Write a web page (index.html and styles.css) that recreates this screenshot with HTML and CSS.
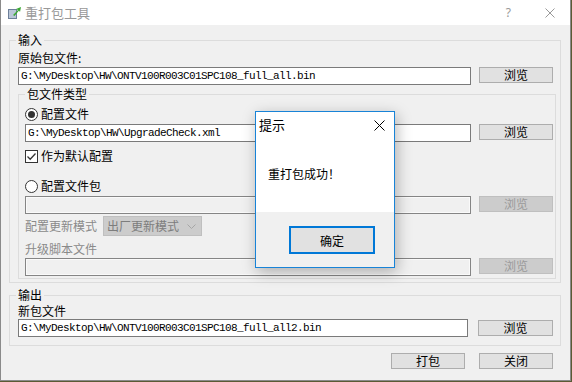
FILE: index.html
```html
<!DOCTYPE html>
<html lang="zh-CN">
<head>
  <meta charset="UTF-8">
  <title>重打包工具</title>
  <link rel="stylesheet" href="styles.css">
</head>
<body>

  <div class="window">
    <!-- title bar (inactive, the message box has focus) -->
    <div class="titlebar">
      <svg class="app-icon" width="16" height="16" viewBox="0 0 16 16">
        <rect x="1" y="4" width="9" height="10" fill="#6d7f99"/>
        <rect x="2" y="5" width="7" height="8" fill="#b9c6d8"/>
        <path d="M6 10 L11 5 L9 4 L14 2 L13 7 L12 5.5 L7.5 11 Z" fill="#3aa832"/>
      </svg>
      <span class="title">重打包工具</span>
      <span class="tb-help">?</span>
      <svg class="tb-close" width="10" height="10" viewBox="0 0 10 10">
        <path d="M0.5 0.5 L9.5 9.5 M9.5 0.5 L0.5 9.5" stroke="#999" stroke-width="1"/>
      </svg>
    </div>

    <div class="content">
      <fieldset class="group group-input">
        <legend>输入</legend>
        <div class="label">原始包文件:</div>
        <div class="file-row row-src">
          <div class="field">G:\MyDesktop\HW\ONTV100R003C01SPC108_full_all.bin</div>
          <button class="btn">浏览</button>
        </div>

        <fieldset class="group group-type">
          <legend>包文件类型</legend>
          <div class="option"><span class="radio checked"></span>配置文件</div>
          <div class="file-row row-cfg">
            <div class="field">G:\MyDesktop\HW\UpgradeCheck.xml</div>
            <button class="btn">浏览</button>
          </div>
          <div class="option row-default">
            <span class="checkbox">
              <svg width="11" height="11" viewBox="0 0 11 11">
                <path d="M1.5 5.5 L4.2 8.2 L9.5 2.5" fill="none" stroke="#333" stroke-width="1.3"/>
              </svg>
            </span>作为默认配置
          </div>
          <div class="option row-pack"><span class="radio"></span>配置文件包</div>
          <div class="file-row row-packfile">
            <div class="field disabled"></div>
            <button class="btn" disabled>浏览</button>
          </div>
          <div class="mode-row">
            <span class="label disabled-text">配置更新模式</span>
            <div class="select">
              <span>出厂更新模式</span>
              <svg width="9" height="5" viewBox="0 0 9 5">
                <path d="M0.5 0.5 L4.5 4.5 L8.5 0.5" fill="none" stroke="#a6a6a6" stroke-width="1"/>
              </svg>
            </div>
          </div>
          <div class="label disabled-text row-script">升级脚本文件</div>
          <div class="file-row row-scriptfile">
            <div class="field disabled"></div>
            <button class="btn" disabled>浏览</button>
          </div>
        </fieldset>
      </fieldset>

      <fieldset class="group group-output">
        <legend>输出</legend>
        <div class="label">新包文件</div>
        <div class="file-row row-out">
          <div class="field">G:\MyDesktop\HW\ONTV100R003C01SPC108_full_all2.bin</div>
          <button class="btn">浏览</button>
        </div>
      </fieldset>

      <div class="actions">
        <button class="btn">打包</button>
        <button class="btn">关闭</button>
      </div>
    </div>

    <!-- message box on top of the main window -->
    <div class="msgbox">
      <div class="msg-main">
        <div class="msg-title">
          <span>提示</span>
          <svg width="11" height="11" viewBox="0 0 11 11">
            <path d="M0.5 0.5 L10.5 10.5 M10.5 0.5 L0.5 10.5" stroke="#000" stroke-width="1"/>
          </svg>
        </div>
        <div class="msg-text">重打包成功！</div>
      </div>
      <div class="msg-footer">
        <button class="msg-ok">确定</button>
      </div>
    </div>
  </div>

</body>
</html>
```

FILE: styles.css
```css
* {
  margin: 0;
  padding: 0;
  box-sizing: border-box;
}

html, body {
  height: 100%;
  background: #5b5a34;
  font-family: "Noto Sans CJK SC", sans-serif;
  font-size: 12px;
  line-height: 14px;
  color: #000;
  overflow: hidden;
}

.window {
  position: relative;
  width: 571px;
  height: 381px;
  background: #f0f0f0;
  border: 1px solid #8a8a8a;
  border-top: none;
  display: flex;
  flex-direction: column;
}

/* title bar */
.titlebar {
  height: 25px;
  background: #fff;
  display: flex;
  align-items: center;
  padding: 0 15px 0 6px;
}

.app-icon {
  flex: none;
}

.title {
  margin-left: 2px;
  font-size: 13px;
  color: #999;
  flex: 1;
}

.tb-help {
  font-family: "Noto Sans", sans-serif;
  font-size: 12px;
  color: #999;
  margin-right: 34px;
}

/* content */
.content {
  display: flex;
  flex-direction: column;
  padding: 0 8px 0 8px;
}

.group {
  border: 1px solid #dcdcdc;
  min-width: 0;
}

.group legend {
  padding: 0 2px;
  margin-left: -2px;
  line-height: 14px;
}

.group-input {
  margin: 8px 1px 0 0;
  padding: 4px 7px 3px 8px;
}

.group-type {
  margin: 2px -3px 0 0;
  padding: 6px 2px 2px 6px;
}

.group-type legend {
  margin-left: 0;
}

.group-output {
  margin: 5px 1px 0 0;
  padding: 2px 7px 8px 8px;
}

.label {
  height: 14px;
  white-space: nowrap;
}

.disabled-text {
  color: #8a8a8a;
}

/* file path row: text box + browse button */
.file-row {
  display: flex;
  gap: 8px;
  align-items: flex-start;
}

.row-src { margin-top: 2px; }
.row-cfg { margin-top: 3px; }
.row-packfile { margin-top: 3px; }
.row-scriptfile { margin-top: 2px; }
.row-out { margin-top: 1px; gap: 10px; }
.row-out .btn { margin-top: 1px; width: 75px; }

.field {
  flex: 1;
  height: 18px;
  background: #fff;
  border: 1px solid #7a7a7a;
  padding: 0 2px;
  font-family: "Liberation Mono", monospace;
  font-size: 11px;
  letter-spacing: -0.6px;
  line-height: 16px;
  white-space: nowrap;
  overflow: hidden;
}

.field.disabled {
  background: #f0f0f0;
  border-color: #858585;
  box-shadow: inset 0 0 0 1px #fafafa;
}

.btn {
  width: 74px;
  height: 16px;
  flex: none;
  background: #e1e1e1;
  border: 1px solid #adadad;
  font-family: inherit;
  font-size: 12px;
  line-height: 14px;
  color: #000;
}

.btn:disabled {
  background: #cccccc;
  border-color: #bfbfbf;
  color: #9a9a9a;
}

/* radio / checkbox options */
.option {
  display: flex;
  align-items: center;
  gap: 3px;
  height: 14px;
}

.row-default { margin-top: 7px; }
.row-pack { margin-top: 16px; }

.radio {
  width: 13px;
  height: 13px;
  border: 1px solid #333;
  border-radius: 50%;
  background: #fff;
  display: flex;
  align-items: center;
  justify-content: center;
}

.radio.checked::after {
  content: "";
  width: 7px;
  height: 7px;
  border-radius: 50%;
  background: #333;
}

.checkbox {
  width: 13px;
  height: 13px;
  border: 1px solid #333;
  background: #fff;
  display: flex;
  align-items: center;
  justify-content: center;
}

/* update mode combo */
.mode-row {
  display: flex;
  align-items: center;
  gap: 6px;
  margin-top: 2px;
}

.select {
  width: 99px;
  height: 20px;
  background: #cccccc;
  border: 1px solid #bfbfbf;
  color: #7d7d7d;
  display: flex;
  align-items: center;
  justify-content: space-between;
  padding: 0 5px 0 3px;
}

.row-script { margin-top: 6px; }

/* bottom buttons */
.actions {
  display: flex;
  justify-content: flex-end;
  gap: 14px;
  margin-top: 7px;
  padding-right: 9px;
}

/* message box */
.msgbox {
  position: absolute;
  left: 254px;
  top: 111px;
  width: 140px;
  height: 157px;
  border: 1px solid #1883d7;
  background: #f0f0f0;
  box-shadow: 2px 4px 14px rgba(0, 0, 0, 0.28);
  display: flex;
  flex-direction: column;
}

.msg-main {
  height: 100px;
  background: #fff;
}

.msg-title {
  height: 26px;
  display: flex;
  align-items: center;
  justify-content: space-between;
  padding: 0 9px 0 3px;
  font-size: 13px;
}

.msg-text {
  margin-top: 29px;
  padding-left: 12px;
}

.msg-footer {
  flex: 1;
  display: flex;
  justify-content: flex-end;
  align-items: flex-start;
  padding: 14px 19px 0 0;
}

.msg-ok {
  width: 86px;
  height: 28px;
  background: #e1e1e1;
  border: 2px solid #0078d7;
  font-family: inherit;
  font-size: 12px;
  color: #000;
}
```
